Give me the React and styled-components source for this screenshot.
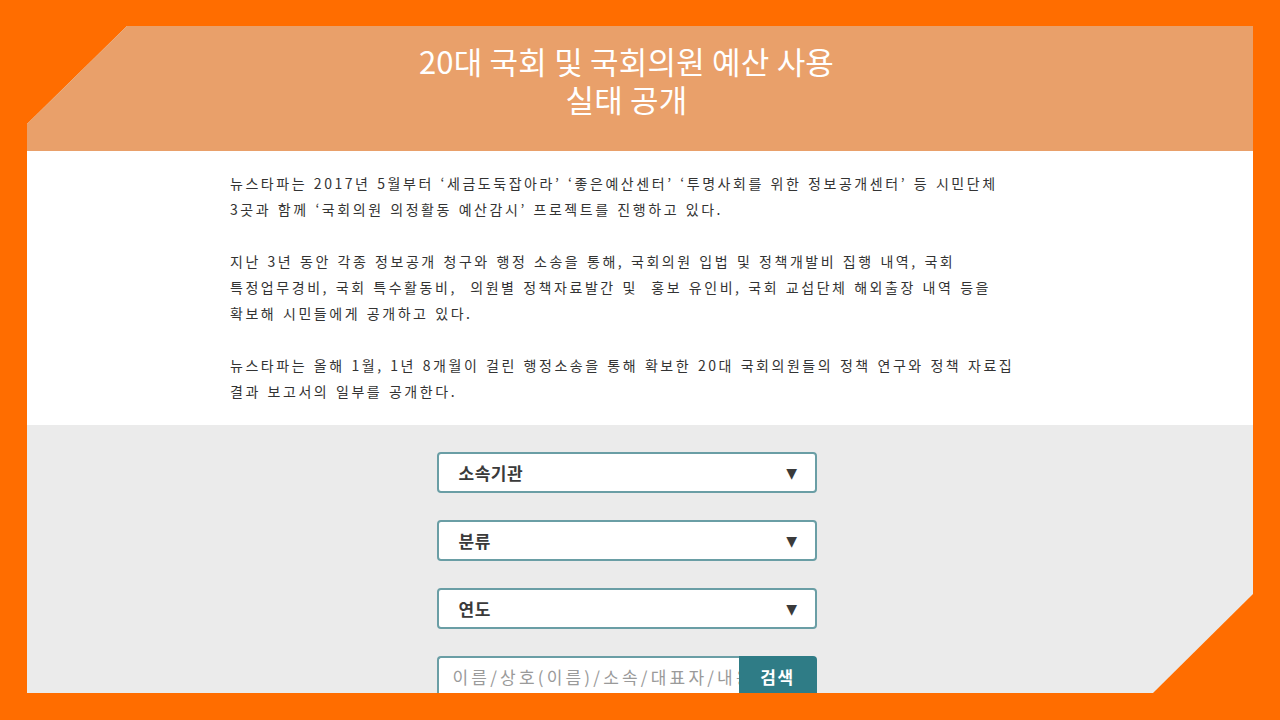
import React from "react";
import styled, { createGlobalStyle } from "styled-components";

const GlobalStyle = createGlobalStyle`
  html, body { margin: 0; padding: 0; }
  body {
    background: #ff6d00;
    font-family: "Noto Sans CJK KR", "Noto Sans", sans-serif;
    overflow: hidden;
  }
`;

const Frame = styled.div`
  width: 1280px;
  height: 720px;
  box-sizing: border-box;
  padding: 26px 27px 27px 27px;
  background: #ff6d00;
`;

const Panel = styled.div`
  height: 100%;
  display: flex;
  flex-direction: column;
  background: #ebebeb;
  clip-path: polygon(100px 0, 100% 0, 100% calc(100% - 99px), calc(100% - 100px) 100%, 0 100%, 0 98px);
  overflow: hidden;
`;

const Header = styled.header`
  flex-shrink: 0;
  height: 125px;
  box-sizing: border-box;
  background: #e9a06a;
  padding: 16px 27px 0 0;
  text-align: center;
  color: #fff;
  font-size: 31px;
  line-height: 38px;
  font-weight: 400;
  letter-spacing: 0.2px;
`;

const TitleLine = styled.div`
  height: 38px;
`;

const Intro = styled.section`
  flex-shrink: 0;
  background: #fff;
  padding: 19px 0 21px 203px;
`;

const Paragraph = styled.p`
  margin: 0 0 26px 0;
  font-size: 14px;
  line-height: 26px;
  color: #333;
  white-space: nowrap;
  letter-spacing: 2.55px;
  word-spacing: 1px;
  &:last-child { margin-bottom: 0; }
`;

const Filters = styled.section`
  display: flex;
  flex-direction: column;
  align-items: center;
  gap: 27px;
  padding: 27px 27px 0 0;
`;

const SelectBox = styled.div`
  width: 380px;
  height: 41px;
  flex-shrink: 0;
  box-sizing: border-box;
  background: #fff;
  border: 2px solid #6a9ea5;
  border-radius: 4px;
  display: flex;
  align-items: center;
  justify-content: space-between;
  padding: 0 17px 0 20px;
  font-size: 17px;
  font-weight: 700;
  letter-spacing: 0.5px;
  color: #3a3a3a;
`;

const Arrow = styled.span`
  font-size: 14px;
  color: #3a3a3a;
  font-family: "DejaVu Sans", sans-serif;
`;

const SearchRow = styled.div`
  width: 380px;
  height: 41px;
  flex-shrink: 0;
  display: flex;
`;

const SearchInput = styled.input`
  flex: 1;
  min-width: 0;
  height: 100%;
  box-sizing: border-box;
  border: 2px solid #6a9ea5;
  border-right: none;
  border-radius: 4px 0 0 4px;
  padding: 0 0 0 14px;
  font-family: "Noto Sans CJK KR", sans-serif;
  font-size: 17px;
  letter-spacing: 3.2px;
  outline: none;
  &::placeholder { color: #9a9a9a; }
`;

const SearchButton = styled.button`
  width: 78px;
  height: 100%;
  border: none;
  border-radius: 0 4px 4px 0;
  background: #2f7c86;
  color: #fff;
  font-family: "Noto Sans CJK KR", sans-serif;
  font-size: 17px;
  font-weight: 700;
  letter-spacing: 1.5px;
`;

const selects = ["소속기관", "분류", "연도"];

export default function App() {
  return (
    <>
      <GlobalStyle />
      <Frame>
        <Panel>
          <Header>
            <TitleLine>20대 국회 및 국회의원 예산 사용</TitleLine>
            <TitleLine>실태 공개</TitleLine>
          </Header>
          <Intro>
            <Paragraph>
              뉴스타파는 2017년 5월부터 ‘세금도둑잡아라’ ‘좋은예산센터’ ‘투명사회를 위한 정보공개센터’ 등 시민단체
              <br />
              3곳과 함께 ‘국회의원 의정활동 예산감시’ 프로젝트를 진행하고 있다.
            </Paragraph>
            <Paragraph>
              지난 3년 동안 각종 정보공개 청구와 행정 소송을 통해, 국회의원 입법 및 정책개발비 집행 내역, 국회
              <br />
              특정업무경비, 국회 특수활동비,&nbsp; 의원별 정책자료발간 및&nbsp; 홍보 유인비, 국회 교섭단체 해외출장 내역 등을
              <br />
              확보해 시민들에게 공개하고 있다.
            </Paragraph>
            <Paragraph>
              뉴스타파는 올해 1월, 1년 8개월이 걸린 행정소송을 통해 확보한 20대 국회의원들의 정책 연구와 정책 자료집
              <br />
              결과 보고서의 일부를 공개한다.
            </Paragraph>
          </Intro>
          <Filters>
            {selects.map((s) => (
              <SelectBox key={s}>
                <span>{s}</span>
                <Arrow>▼</Arrow>
              </SelectBox>
            ))}
            <SearchRow>
              <SearchInput placeholder="이름/상호(이름)/소속/대표자/내용" />
              <SearchButton>검색</SearchButton>
            </SearchRow>
          </Filters>
        </Panel>
      </Frame>
    </>
  );
}
